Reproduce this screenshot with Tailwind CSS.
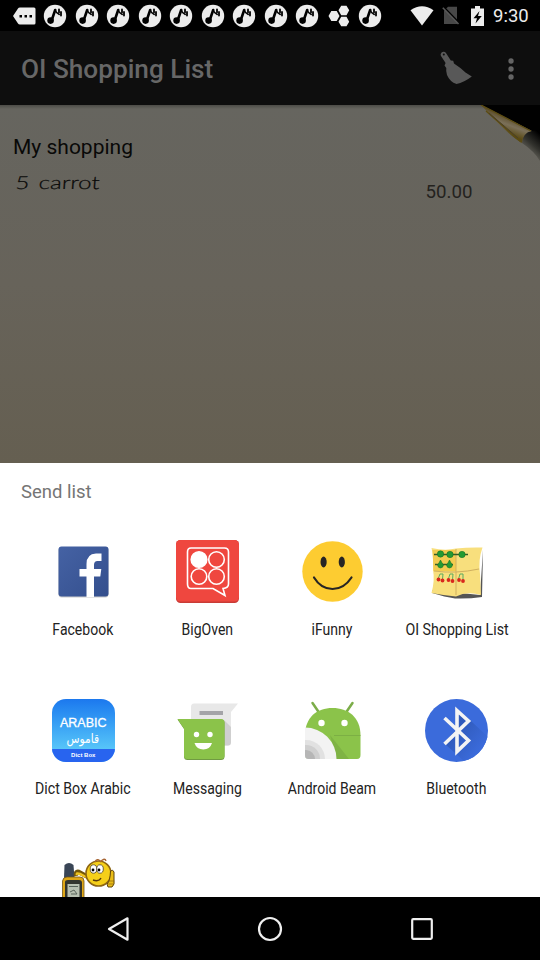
<!DOCTYPE html>
<html lang="en">
<head>
<meta charset="utf-8">
<title>OI Shopping List</title>
<script src="https://cdn.jsdelivr.net/npm/@tailwindcss/browser@4"></script>
</head>
<body class="bg-black">
<svg class="hidden">
  <symbol id="note" viewBox="0 0 24 24">
    <circle cx="12" cy="12" r="11.2" fill="#ececec"/>
    <circle cx="7.600" cy="16.600" r="3.300" fill="#000"/>
    <path d="M8.800 16 12.200 6" fill="none" stroke="#000" stroke-width="2.600" stroke-linecap="round"/>
    <path d="M12.200 6Q13 9 16.300 10.500" fill="none" stroke="#000" stroke-width="1.400" stroke-linecap="round"/>
    <path d="M16 5.500v3M18 8v3.500" fill="none" stroke="#000" stroke-width="1.800" stroke-linecap="round"/>
  </symbol>
</svg>
<main class="w-[540px] h-[960px] flex flex-col overflow-hidden font-['Roboto',sans-serif]">
  <div class="h-[31px] shrink-0 bg-black flex items-center pl-[8px] pr-[10px]">
    <div class="flex items-center h-full">
      <div class="w-[31.5px] flex justify-center"><svg class="w-[24px] h-[18px]" viewBox="0 0 24 18"><path d="M1 9 6 1.500Q6.500.5 8 .5H22Q23.500.5 23.500 2V16Q23.500 17.500 22 17.500H8Q6.500 17.500 6 16.500Z" fill="#ececec"/><path d="M7.500 8h2.500v2.500H7.500zM12.500 8H15v2.500h-2.500zM17.500 8H20v2.500h-2.500z" fill="#000"/></svg></div>
      <div class="w-[31.5px] flex justify-center"><svg class="size-[24px]"><use href="#note"/></svg></div>
      <div class="w-[31.5px] flex justify-center"><svg class="size-[24px]"><use href="#note"/></svg></div>
      <div class="w-[31.5px] flex justify-center"><svg class="size-[24px]"><use href="#note"/></svg></div>
      <div class="w-[31.5px] flex justify-center"><svg class="size-[24px]"><use href="#note"/></svg></div>
      <div class="w-[31.5px] flex justify-center"><svg class="size-[24px]"><use href="#note"/></svg></div>
      <div class="w-[31.5px] flex justify-center"><svg class="size-[24px]"><use href="#note"/></svg></div>
      <div class="w-[31.5px] flex justify-center"><svg class="size-[24px]"><use href="#note"/></svg></div>
      <div class="w-[31.5px] flex justify-center"><svg class="size-[24px]"><use href="#note"/></svg></div>
      <div class="w-[31.5px] flex justify-center"><svg class="size-[24px]"><use href="#note"/></svg></div>
      <div class="w-[31.5px] flex justify-center"><svg class="w-[22px] h-[22px]" viewBox="0 0 22 22" fill="#ececec"><path d="M.5 11 3.300 6h5.400l2.800 5-2.800 5H3.300zM10.500 5.300 13.200.7h5.300l2.700 4.600-2.700 4.900h-5.300zM10.500 16.700l2.700-4.900h5.300l2.700 4.900-2.700 4.600h-5.300z"/></svg></div>
      <div class="w-[31.5px] flex justify-center"><svg class="size-[24px]"><use href="#note"/></svg></div>
    </div>
    <div class="ml-auto flex items-center">
      <svg class="w-[24px] h-[20px]" viewBox="0 0 24 20"><path d="M.5 4.300Q12-4 23.500 4.300L12 19.500Z" fill="#ececec"/></svg>
      <svg class="w-[18px] h-[19px] ml-[8px]" viewBox="0 0 18 19"><path d="M6 .8H15V18H2V4.800Z" fill="#484848"/><path d="M1.800 1 17.500 17.200" stroke="#000" stroke-width="1.600"/><path d="M.8 1.800 16.500 18" stroke="#585858" stroke-width="1.600"/></svg>
      <svg class="w-[13px] h-[20px] ml-[11px]" viewBox="0 0 13 20"><path d="M4 0h5v2.500h4V20H0V2.500H4Z" fill="#ececec"/><path d="M8.500 5 2.500 12.200H6L4.500 17.500 10.800 10H7Z" fill="#000"/></svg>
      <span class="ml-[9px] leading-[30px] text-[#ececec] text-[18.5px] w-[37px] whitespace-nowrap">9:30</span>
    </div>
  </div>

  <div class="h-[74px] shrink-0 bg-[#0e0e0e] flex items-center pl-[21px] pr-[26px]">
    <h1 class="text-[26.2px] font-medium text-[#676767] leading-[30px] mt-[2px] whitespace-nowrap">OI Shopping List</h1>
    <svg class="w-[33px] h-[34px] ml-auto" viewBox="0 0 33 34"><path d="M.7 3Q1.500.6 4 .8Q5.500 1 6.300 2.600L10.800 9.500 13.200 9.800 14 12.500Q21 17 25.500 21.500L31.800 25.500Q24 31.500 16.500 33Q10 31 7 24Q5.800 20 6.300 17L4.500 14.500 5.600 12 1 5Q.5 4 .7 3Z" fill="#585858"/><circle cx="3.800" cy="3.500" r="1" fill="#0e0e0e"/></svg>
    <svg class="w-[6px] h-[22px] ml-[35px] mt-px" viewBox="0 0 6 22" fill="#646464"><circle cx="3" cy="3" r="2.700"/><circle cx="3" cy="11" r="2.700"/><circle cx="3" cy="19" r="2.700"/></svg>
  </div>

  <div class="relative h-[357.5px] shrink-0 bg-linear-to-b from-[#66655f] via-[#67635a] to-[#655f51] pt-[28px]">
    <div class="absolute inset-x-0 top-0 h-[4px] bg-linear-to-b from-black/25 to-transparent"></div>
    <svg class="absolute right-0 top-0 w-[60px] h-[56px]" viewBox="0 0 60 56">
      <defs>
        <linearGradient id="sh" x1="0.700" y1="0" x2="0.200" y2="1"><stop offset="0" stop-color="#000"/><stop offset=".45" stop-color="#34342f"/><stop offset="1" stop-color="#66645b" stop-opacity="0"/></linearGradient>
        <linearGradient id="fold" x1="0.600" y1="0.300" x2="0.400" y2="0.700"><stop offset="0" stop-color="#564721"/><stop offset=".5" stop-color="#7b7059"/><stop offset="1" stop-color="#5a4a14"/></linearGradient>
      </defs>
      <path d="M1 0H60V30L52 26Z" fill="#010101"/>
      <path d="M43 28 52 26 60 24V56Q54 46 42 38Z" fill="url(#sh)"/>
      <path d="M1 0 51 26Q43 28 42 38Q28 30 1 0Z" fill="url(#fold)"/>
      <path d="M1 0 51 26M6 6 41 37" stroke="#5c4c12" stroke-width="1.300" fill="none"/>
      <path d="M9 8 38 33" stroke="#4a4028" stroke-width="1"/>
    </svg>
    <h2 class="pl-[13px] text-[21px] leading-[28px] text-[#090908]">My shopping</h2>
    <div class="flex pl-[16px] pr-[67.5px] justify-between h-[44px]">
      <span class="font-['Lato',sans-serif] font-light text-[18px] leading-[20px] pt-[11px] text-[#090908] whitespace-nowrap [word-spacing:2px] origin-left scale-x-[1.34] -skew-x-3 h-[31px] [-webkit-text-stroke:0.2px_#090908]">5 carrot</span>
      <span class="text-[18.7px] leading-[24px] pt-[18.5px] text-[#24221e]">50.00</span>
    </div>
  </div>

  <section class="h-[434.5px] shrink-0 bg-white overflow-hidden">
    <p class="pl-[21px] pt-[16px] text-[18.5px] leading-[26px] text-[#757575]">Send list</p>
    <div class="grid grid-cols-4 px-[21px] pt-[35px] text-[16.5px] text-[#222]">
      <div class="h-[159px] flex flex-col items-center">
        <svg class="size-[63px]" viewBox="0 0 63 63"><defs><linearGradient id="fb" x2="1" y2="1"><stop stop-color="#4562a4"/><stop offset="1" stop-color="#344f8d"/></linearGradient></defs><rect x="6.500" y="7.500" width="50" height="50" rx="3" fill="#ccc"/><rect x="6.500" y="6.500" width="50" height="50" rx="3" fill="url(#fb)"/><path d="M34.500 57V36.500H27.500V29H34.500V24Q34.500 14 44 13.500H49.500V21H45.500Q42 21 42 25V29H49.300L48.300 36.500H42V57Z" fill="#fff"/></svg>
        <span class="mt-[15px] leading-[24px] whitespace-nowrap scale-x-[.85]">Facebook</span>
      </div>
      <div class="h-[159px] flex flex-col items-center">
        <svg class="size-[63px]" viewBox="0 0 63 63"><rect width="63" height="63" rx="4.500" fill="#c93b36"/><rect width="63" height="61.500" rx="4.500" fill="#ef473f"/><g fill="none" stroke="#fff" stroke-width="1.600"><path d="M15 8H48.500Q52.500 8 52.500 12V44Q52.500 48 47 48.500L49 55.500 37 48.500H15Q11.500 48.500 11.500 44V12Q11.500 8 15 8Z"/><circle cx="23" cy="19.500" r="7.800" fill="#fff"/><circle cx="40.500" cy="19.500" r="7.800"/><circle cx="23" cy="36.500" r="7.800"/><circle cx="40.500" cy="36.500" r="7.800"/></g></svg>
        <span class="mt-[15px] leading-[24px] whitespace-nowrap scale-x-[.85]">BigOven</span>
      </div>
      <div class="h-[159px] flex flex-col items-center">
        <svg class="size-[63px]" viewBox="0 0 63 63"><circle cx="31.500" cy="31.500" r="30.200" fill="#fdcc31"/><ellipse cx="22.600" cy="22" rx="3.100" ry="5.400" fill="#272524"/><ellipse cx="40.800" cy="22" rx="3.100" ry="5.400" fill="#272524"/><path d="M13 37.500Q20 49 31.500 49T50.500 37.500" fill="none" stroke="#272524" stroke-width="2.200" stroke-linecap="round"/></svg>
        <span class="mt-[15px] leading-[24px] whitespace-nowrap scale-x-[.85]">iFunny</span>
      </div>
      <div class="h-[159px] flex flex-col items-center">
        <svg class="size-[63px]" viewBox="0 0 63 63"><path d="M7 53Q20 57 30 58.500Q44 59 57 57L58 10 55 55 7 50Z" fill="#555"/><path d="M6.500 8Q20 11 31 8.500Q44 7 57.500 7.500Q53 20 55 34L56 55Q42 51 31 56.500Q18 55 6.500 53Q10 40 8 30Q9 18 6.500 8Z" fill="#f8df7d"/><path d="M7.500 10 31 10V31H8.500Z" fill="#f3cc50"/><path d="M31 9V55M9 31Q31 34 54 29" stroke="#d0b060" fill="none"/><path d="M9 14.500H43M10 24.500H28" stroke="#365c27" stroke-width="1.500"/><g fill="#259a32" stroke="#146c22" stroke-width=".5"><circle cx="15.500" cy="14" r="3.200"/><circle cx="25" cy="14.500" r="3.200"/><circle cx="37" cy="14.500" r="3.200"/><path d="M15.500 20Q17 23 18.500 25 18 28 15.500 28 13 28 12.500 25 14 23 15.500 20ZM24.500 20Q26 23 27.500 25 27 28 24.500 28 22 28 21.500 25 23 23 24.500 20Z"/></g><g fill="none" stroke="#5bab62" stroke-width="1"><path d="M13 39 15 34H18L17.500 39M23 40 25 34H28L27.500 40M33.500 39 35 34H38V40"/></g><g fill="#d9281c"><circle cx="13.500" cy="39.500" r="1.900"/><circle cx="17.500" cy="40.500" r="1.900"/><circle cx="23.500" cy="40" r="1.900"/><circle cx="27.500" cy="41" r="1.900"/><circle cx="34" cy="40" r="1.900"/><circle cx="38" cy="41" r="1.900"/></g></svg>
        <span class="mt-[15px] leading-[24px] whitespace-nowrap scale-x-[.86]">OI Shopping List</span>
      </div>
      <div class="h-[159px] flex flex-col items-center">
        <div class="size-[63px] rounded-[14px] overflow-hidden bg-linear-to-b from-[#1c78ee] to-[#68d8fa] flex flex-col items-center text-white font-['Liberation_Sans',sans-serif]">
          <span class="text-[12.5px] leading-[14px] pt-[17px] [-webkit-text-stroke:0.3px_white]">ARABIC</span>
          <span class="text-[13px] leading-[17px] h-[19px] font-['DejaVu_Sans',sans-serif] whitespace-nowrap scale-x-[.82]" lang="ar" dir="rtl">قاموس</span>
          <span class="w-full h-[13px] bg-[#2864ef] text-center text-[6px] font-bold leading-[13px]">Dict Box</span>
        </div>
        <span class="mt-[15px] leading-[24px] whitespace-nowrap scale-x-[.855]">Dict Box Arabic</span>
      </div>
      <div class="h-[159px] flex flex-col items-center">
        <svg class="size-[63px]" viewBox="0 0 63 63"><path d="M18 4.500H62L55 13V43Q55 46.500 52 46.500H18Q15 46.500 15 43V8Q15 4.500 18 4.500Z" fill="#e8e8e8"/><path d="M48 21 55 28V43Q55 46.500 52 46.500H48Z" fill="#cfcfcf"/><path d="M23.500 12H47V16H23.500Z" fill="#a4a4a8"/><path d="M1.500 20.500H45Q48.500 20.500 48.500 24V57.500Q48.500 61 45 61H11.500Q8 61 8 57.500V30Z" fill="#709b42"/><path d="M1.500 20H45Q48.500 20 48.500 23.500V56.500Q48.500 60 45 60H11.500Q8 60 8 56.500V29.500Z" fill="#8bc34a"/><circle cx="20.500" cy="35.500" r="2.700" fill="#fff"/><circle cx="34" cy="35.500" r="2.700" fill="#fff"/><path d="M18.500 44H36Q34 50.500 27.300 50.500T18.500 44Z" fill="#fff"/></svg>
        <span class="mt-[15px] leading-[24px] whitespace-nowrap scale-x-[.85]">Messaging</span>
      </div>
      <div class="h-[159px] flex flex-col items-center">
        <svg class="size-[63px]" viewBox="0 0 63 63"><defs><clipPath id="beam"><path d="M4 0H60V56Q60 60 56 60H8Q4 60 4 56Z"/></clipPath></defs><path d="M11.500 4 18 13.500M51.500 4 45 13.500" stroke="#7cad49" stroke-width="2.500" stroke-linecap="round"/><path d="M4 36.500C4 18 16 9 31.500 9S59.500 18 59.500 36.500V56Q59.500 60 56 60H8Q4 60 4 56Z" fill="#8bc34a"/><path d="M33 36.500H59.500" stroke="#78a942" stroke-width=".8"/><path d="M29 36 48 60H35Z" fill="#7fb345"/><circle cx="20.500" cy="24" r="3.200" fill="#fff"/><circle cx="43.500" cy="24" r="3.200" fill="#fff"/><g clip-path="url(#beam)"><circle cx="4" cy="60" r="31.500" fill="#f3f3f3"/><circle cx="5" cy="60" r="19" fill="#e1e1e1"/><circle cx="5" cy="60" r="14" fill="#cfcfcf"/><circle cx="5" cy="60" r="9" fill="#b6b6b6"/></g></svg>
        <span class="mt-[15px] leading-[24px] whitespace-nowrap scale-x-[.85]">Android Beam</span>
      </div>
      <div class="h-[159px] flex flex-col items-center">
        <svg class="size-[63px]" viewBox="0 0 63 63"><defs><clipPath id="bt"><circle cx="31.500" cy="31.500" r="31.500"/></clipPath><linearGradient id="bs" x1="0" y1="0" x2="1" y2="1"><stop offset=".3" stop-color="#2f59b9"/><stop offset=".8" stop-color="#3b6bdb"/></linearGradient></defs><circle cx="31.500" cy="31.500" r="31.500" fill="#3b6bdb"/><path d="M32 9 63 38V63H40L19 44 30 32Z" fill="url(#bs)" clip-path="url(#bt)"/><path d="M19.500 19 43.500 41.500 32 52.500V11.500L43.500 22 19.500 45" fill="none" stroke="#f4f4f4" stroke-width="3.600"/></svg>
        <span class="mt-[15px] leading-[24px] whitespace-nowrap scale-x-[.85]">Bluetooth</span>
      </div>
      <div class="h-[159px] flex flex-col items-center">
        <svg class="size-[63px]" viewBox="0 0 63 63"><path d="M12.500 7Q17 3 21.500 7L22.500 20H12Z" fill="#394556"/><path d="M10.500 23Q11 19 15 19H28Q32 19 32 23V63H10.500Z" fill="#dfa716" stroke="#725719" stroke-width=".8"/><path d="M13 24Q13 22 16 22H27Q30 22 30 25V60H13Z" fill="#34362f"/><path d="M15.500 26H27.500V44H15.500Z" fill="#b9c1b2"/><path d="M17 28.500H26M18 34 22 32 25 36H19M19 41H26" stroke="#59645a" fill="none"/><path d="M24 18Q23 13 27 14L34 18Q37 20 41 17" stroke="#73570a" stroke-width="4.500" fill="none"/><path d="M25 17Q24 14.500 28 16L34 19" stroke="#efc420" stroke-width="2.500" fill="none"/><circle cx="46.500" cy="15.500" r="12.500" fill="#f5cf19" stroke="#8d6512" stroke-width="1.600"/><path d="M43 4Q45 0 48 3M48 4Q53-1 54 3" stroke="#a76635" fill="none" stroke-width="1.300"/><g fill="#fff" stroke="#493e2a" stroke-width=".8"><ellipse cx="41.500" cy="11" rx="3.300" ry="4.200"/><ellipse cx="48" cy="11" rx="3.300" ry="4.200"/></g><circle cx="41" cy="12" r="1.400"/><circle cx="47" cy="12" r="1.400"/><path d="M41 22Q47 24 49 20" stroke="#563809" stroke-width="1.400" fill="none"/><path d="M55 26Q58 24 58.500 13Q61 11 62 14V21Q63 27 60 29H56Z" fill="#eabd17" stroke="#5e440b"/><path d="M56 23H62M56 26H61" stroke="#8d6512" stroke-width=".7"/></svg>
      </div>
    </div>
  </section>

  <nav class="h-[63px] shrink-0 bg-black flex justify-between items-center pl-[106px] pr-[106px]">
    <svg class="w-[24px] h-[26px]" viewBox="0 0 24 26"><path d="M3 13 21.500 2.300V23.700Z" fill="none" stroke="#efefef" stroke-width="2.200" stroke-linejoin="round"/></svg>
    <svg class="size-[26px]" viewBox="0 0 26 26"><circle cx="13" cy="13" r="11" fill="none" stroke="#efefef" stroke-width="2.200"/></svg>
    <svg class="size-[24px]" viewBox="0 0 24 24"><rect x="2.200" y="2.200" width="19.600" height="19.600" rx="1" fill="none" stroke="#efefef" stroke-width="2.200"/></svg>
  </nav>
</main>
</body>
</html>
